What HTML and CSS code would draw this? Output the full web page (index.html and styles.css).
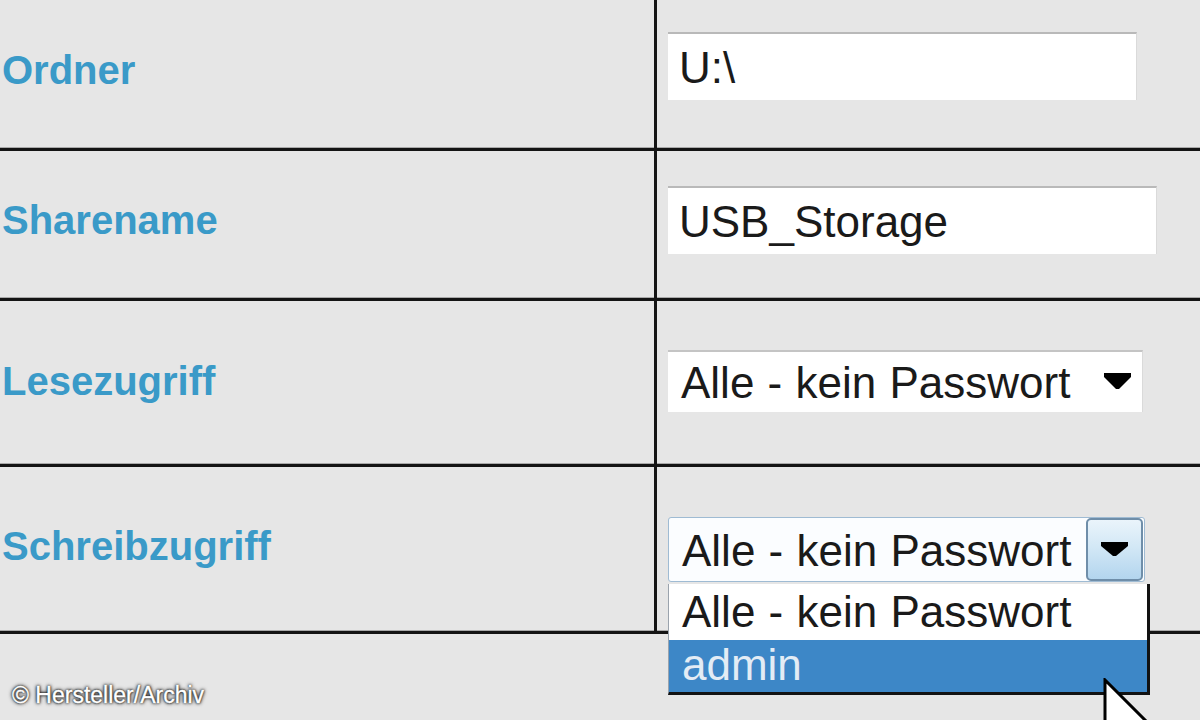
FILE: index.html
```html
<!DOCTYPE html>
<html lang="de">
<head>
<meta charset="utf-8">
<title>Freigabe</title>
<link rel="stylesheet" href="styles.css">
</head>
<body>
<div class="form">
  <div class="row r1">
    <div class="label-cell"><span class="label">Ordner</span></div>
    <div class="field-cell"><input class="text-field f1" type="text" value="U:\"></div>
  </div>
  <div class="row r2">
    <div class="label-cell"><span class="label">Sharename</span></div>
    <div class="field-cell"><input class="text-field f2" type="text" value="USB_Storage"></div>
  </div>
  <div class="row r3">
    <div class="label-cell"><span class="label">Lesezugriff</span></div>
    <div class="field-cell">
      <div class="select s3">
        <span class="select-text">Alle - kein Passwort</span>
        <svg class="arrow" width="27" height="16" viewBox="0 0 27 16"><polygon points="0,0 27,0 27,4 15,16 12,16 0,4" fill="#000"/></svg>
      </div>
    </div>
  </div>
  <div class="row r4">
    <div class="label-cell"><span class="label">Schreibzugriff</span></div>
    <div class="field-cell">
      <div class="select-wrap">
        <div class="select s4">
          <span class="select-text">Alle - kein Passwort</span>
          <span class="select-btn">
            <svg class="arrow" width="27" height="14" viewBox="0 0 27 14"><polygon points="0,0 27,0 27,4 15,14 12,14 0,4" fill="#000"/></svg>
          </span>
        </div>
        <ul class="dropdown">
          <li class="option">Alle - kein Passwort</li>
          <li class="option selected">admin</li>
        </ul>
      </div>
    </div>
  </div>
  <div class="row r5"></div>
</div>
<div class="credit">© Hersteller/Archiv</div>
<svg class="cursor" width="60" height="42" viewBox="0 0 60 42">
  <path d="M2,2 L2,66 L18,50 L30,78 L38,74 L26,46 L46,46 Z" fill="#fff" stroke="#000" stroke-width="3" stroke-linejoin="miter"/>
</svg>
</body>
</html>
```

FILE: styles.css
```css
* { box-sizing: border-box; }

html, body {
  margin: 0;
  padding: 0;
  width: 1200px;
  height: 720px;
  overflow: hidden;
  background: #e6e6e6;
  font-family: "Liberation Sans", Arial, sans-serif;
}

body { position: relative; }

.form {
  display: flex;
  flex-direction: column;
  width: 1200px;
}

.row {
  display: grid;
  grid-template-columns: 657px 1fr;
  border-bottom: 3px solid #141414;
  box-shadow: inset 0 -1px 0 #a9a9a9;
}

.r1 { height: 151px; }
.r2 { height: 150px; }
.r3 { height: 166px; }
.r4 { height: 167px; }
.r5 { height: 86px; border-bottom: none; box-shadow: none; }

.label-cell {
  display: flex;
  align-items: center;
  padding-left: 2px;
  border-right: 3px solid #141414;
}

.r5 .label-cell { border-right: none; }

.field-cell {
  display: flex;
  align-items: center;
  padding-left: 11px;
}

.r1 .label-cell { padding-bottom: 8px; }
.r1 .field-cell { padding-bottom: 16px; }
.r2 .label-cell, .r2 .field-cell { padding-bottom: 9px; }
.r3 .label-cell, .r3 .field-cell { padding-bottom: 3px; }
.r4 .label-cell { padding-bottom: 6px; }

.label {
  font-family: "Liberation Sans", Arial, sans-serif;
  font-weight: bold;
  font-size: 40px;
  line-height: 1;
  color: #3a9ac8;
}

.text-field {
  appearance: none;
  -webkit-appearance: none;
  display: block;
  height: 68px;
  margin: 0;
  padding: 2px 0 0 11px;
  border: none;
  border-top: 2px solid #b9b9b9;
  border-right: 1px solid #dadada;
  border-radius: 0;
  outline: none;
  background: #fff;
  font-family: "Liberation Sans", Arial, sans-serif;
  font-size: 44px;
  line-height: 64px;
  color: #1a1a1a;
}

.f1 { width: 469px; }
.f2 { width: 489px; }

.select {
  display: flex;
  align-items: center;
  background: #fff;
  font-family: "Liberation Sans", Arial, sans-serif;
  font-size: 44px;
  color: #1a1a1a;
}

.select-text {
  padding-left: 13px;
  line-height: 1;
  white-space: nowrap;
  word-spacing: 1px;
}

.s3 {
  width: 475px;
  height: 62px;
  border-top: 2px solid #c4c4c4;
  border-right: 1px solid #dadada;
  padding-top: 2px;
  justify-content: space-between;
  padding-right: 11px;
}

.s3 .arrow { margin-top: -4px; }

.select-wrap {
  position: relative;
  width: 477px;
  height: 65px;
}

.s4 {
  width: 477px;
  height: 65px;
  border: 1px solid #9fbbd3;
  border-radius: 3px;
  background: #fbfdff;
  justify-content: space-between;
  padding-right: 1px;
}

.s4 .select-text { padding-top: 4px; }

.select-btn {
  display: flex;
  align-items: center;
  justify-content: center;
  width: 57px;
  height: 63px;
  border: 2px solid #6f8ea9;
  border-radius: 5px;
  background: linear-gradient(#eaf4fb, #d3e8f6 45%, #b3d5ee);
}

.dropdown {
  position: absolute;
  left: 0;
  top: 67px;
  width: 482px;
  margin: 0;
  padding: 0;
  list-style: none;
  background: #fff;
  border-left: 1px solid #9aa3ad;
  border-right: 3px solid #121212;
  border-bottom: 3px solid #121212;
  z-index: 2;
}

.option {
  font-family: "Liberation Sans", Arial, sans-serif;
  font-size: 44px;
  color: #1a1a1a;
  padding-left: 13px;
  height: 56px;
  line-height: 56px;
  white-space: nowrap;
  word-spacing: 1px;
}

.option.selected {
  height: 52px;
  line-height: 50px;
  background: #3d87c7;
  color: #e3ecf5;
}

.credit {
  position: absolute;
  left: 12px;
  top: 684px;
  font-family: "Liberation Sans", Arial, sans-serif;
  font-size: 23px;
  line-height: 1;
  color: #ffffff;
  -webkit-text-stroke: 0.4px #ffffff;
  text-shadow: 0 0 4px #1a1a1a, 0 0 3px #222, 0 0 2px #333, 0 0 1px #333;
}

.cursor {
  position: absolute;
  left: 1103px;
  top: 678px;
  z-index: 3;
  display: block;
}
```
